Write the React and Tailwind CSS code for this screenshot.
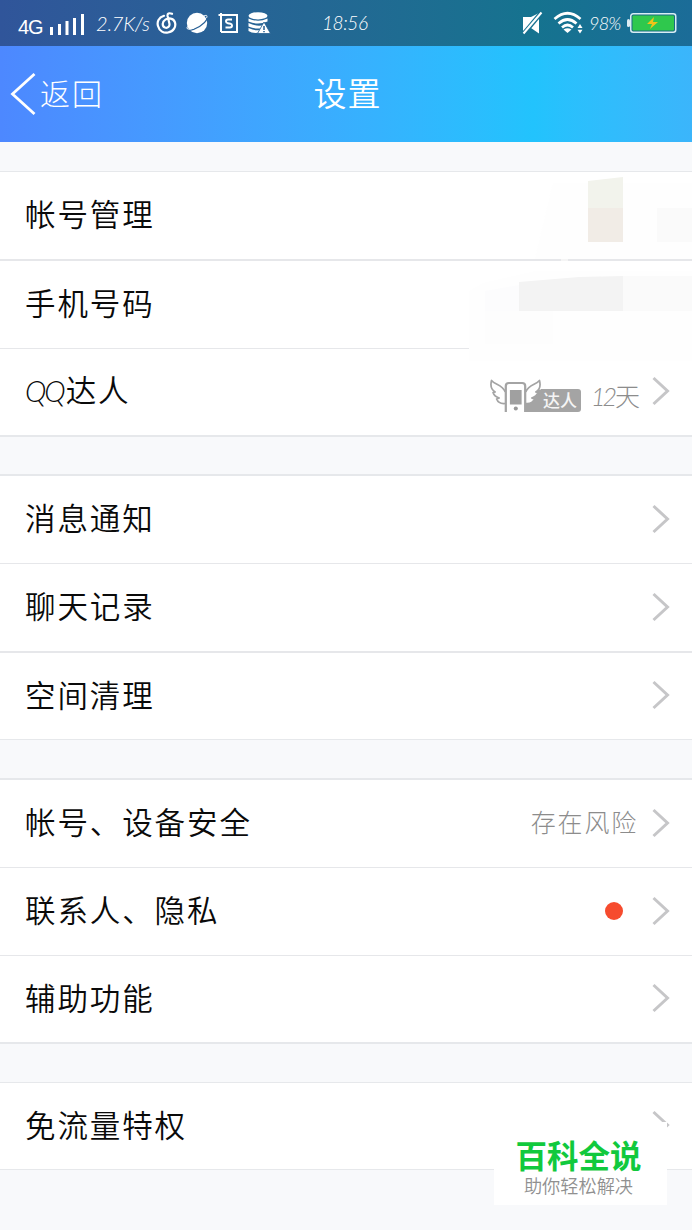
import React from "react";

function Chevron() {
  return (
    <svg className="mb-[2px] block h-[30px] w-[18px] shrink-0" viewBox="0 0 18 30" fill="none" stroke="#c6c6c8" strokeWidth="3">
      <path d="M1.500 2 L15.500 15 L1.500 28" />
    </svg>
  );
}

function Row({ label, arrow = true, className = "", children }) {
  return (
    <div className={`flex items-center border-[#e6e7ea] pl-[25px] pr-[22px] ${className}`}>
      <span className="whitespace-nowrap pb-[5px] text-[30.500px] font-[350] leading-10 tracking-[1.900px] text-[#0a0a0a]">{label}</span>
      <div className="ml-auto flex items-center">
        {children}
        {arrow && <Chevron />}
      </div>
    </div>
  );
}

function Group({ children, className = "" }) {
  return <section className={`border-[#e6e8eb] bg-white ${className}`}>{children}</section>;
}

function StatusBar() {
  return (
    <div className="flex h-[46px] items-center bg-linear-to-r from-[#30559a] via-[#15738f] via-77% to-[#1b6c98] text-white">
      <div className="flex h-full w-[322px] items-center pl-[18px]">
        <span className="mt-[7px] w-[32px] font-['Liberation_Sans'] text-[20px] leading-6 tracking-[-1px]">4G</span>
        <svg className="mt-[1px] h-[24px] w-[36px]" viewBox="0 0 36 24" fill="#fff">
          <rect x="0" y="15" width="3" height="8" />
          <rect x="8" y="12" width="3" height="11" />
          <rect x="15.500" y="9" width="3" height="14" />
          <rect x="23" y="6" width="3" height="17" />
          <rect x="31" y="2" width="3" height="21" />
        </svg>
        <span className="ml-[10px] w-[60px] whitespace-nowrap font-[Lato,sans-serif] text-[20px] font-light italic leading-6 tracking-[-0.200px]">2.7K/s</span>
        <svg className="h-[24px] w-[22px]" viewBox="0 0 22 24" fill="none" stroke="#fff" strokeWidth="2.200" strokeLinecap="round">
          <path d="M8 4.800 C2.500 6.500 0.800 11 2 15 C3.400 20.500 8 22.300 12 21.500 C17.500 20.600 20.500 15.500 18.800 11 C17.300 7 12.500 6.700 9.400 8.600 C6 10.700 5.800 15.200 9 16.500 C11.700 17.500 14 15.300 13.400 12.500 L11.600 5 C11.200 2.600 13 1.500 16 2.800" />
        </svg>
        <svg className="ml-[8px] h-[24px] w-[23px]" viewBox="0 0 23 24">
          <circle cx="11" cy="12" r="10.200" fill="#fff" />
          <path d="M3 19.500 C10 18.500 18 14 21.500 7.500" fill="none" stroke="#286096" strokeWidth="1.300" />
          <path d="M1.500 15.500 C-.5 19 4 18.500 8 17 M18 5 C21 3.500 21.500 4.800 20.500 7" fill="none" stroke="#fff" strokeWidth="1" />
        </svg>
        <svg className="ml-[9px] h-[24px] w-[22px]" viewBox="0 0 22 24" fill="none" stroke="#fff" strokeWidth="2">
          <path d="M3 2 L3 21 M.5 4 L19 4 L19 21 L3 21" />
          <path d="M14 8.500 H10 Q8 8.500 8 10.200 Q8 12 9.800 12.300 L12.500 12.700 Q14 13 14 14.500 Q14 16.500 12 16.500 H7.500" />
        </svg>
        <svg className="ml-[8px] h-[24px] w-[24px]" viewBox="0 0 24 24">
          <g fill="#fff">
            <ellipse cx="10" cy="4.800" rx="9.500" ry="3.600" />
            <path d="M.5 7.500 Q10 12 19.500 7.500 V10.500 Q10 14.500 .5 10.500 Z" />
            <path d="M.5 12 Q10 16.500 17 13.500 L14.500 17 Q7 18.500 .5 15.500 Z" />
            <path d="M.5 17 Q7 20 11.500 19 L10 21.800 Q4 22.500 .5 20 Z" />
            <path d="M16 11 L22.500 22.500 H9.500 Z" stroke="#245f92" strokeWidth=".8" />
          </g>
          <path d="M16 15 V19 M16 20 V21.200" stroke="#245f92" strokeWidth="1.500" />
        </svg>
      </div>
      <span className="w-[200px] font-[Lato,sans-serif] text-[19px] font-light italic leading-6 tracking-[-0.400px]">18:56</span>
      <svg className="h-[24px] w-[23px]" viewBox="0 0 23 24">
        <path d="M9 17 L17 22.500 V2 L9 6 H1 V20 Z" fill="#fff" />
        <path d="M1.500 23 L19.500 1.500" stroke="#17718f" strokeWidth="4.500" />
        <path d="M1.500 22.500 L19.500 1.500" stroke="#fff" strokeWidth="2" />
      </svg>
      <svg className="ml-[8px] h-[24px] w-[31px]" viewBox="0 0 31 24" fill="none" stroke="#fff" strokeWidth="2.700">
        <path d="M1.500 8 Q14.500 -3.500 27.500 8 M5.500 12.500 Q14.500 4.500 23.500 12.500 M9 16.500 Q14.500 11.500 20 16.500" />
        <path d="M10.500 18.500 Q14.500 16 18.500 18.500 L14.500 22 Z" fill="#fff" stroke="none" />
        <path d="M24.500 17 L27 13 L29.500 17 Z M24.500 18.800 L27 22.500 L29.500 18.800 Z" fill="#fff" stroke="none" />
      </svg>
      <span className="ml-[5px] w-[37px] whitespace-nowrap font-[Lato,sans-serif] text-[18px] font-light italic leading-6 tracking-[-0.800px]">98%</span>
      <svg className="h-[22px] w-[52px]" viewBox="0 0 52 22">
        <rect x="1" y="7" width="3" height="8" rx="1.500" fill="#dcecf4" />
        <rect x="4.750" y="1.750" width="45" height="18.500" rx="2.500" fill="#186b82" stroke="#d8edf4" strokeWidth="1.500" />
        <rect x="6.500" y="3.500" width="41.500" height="15" rx="1" fill="#2fc84d" />
        <path d="M28 5 L21 12 H26 L24 17 L32 10 H27 Z" fill="#f0c419" />
      </svg>
    </div>
  );
}

function Header() {
  return (
    <header className="grid h-24 grid-cols-3 items-center bg-linear-to-r from-[#4d88ff] via-[#22c3fd] via-77% to-[#3bb5fb] text-white">
      <div className="flex items-center pl-[10px]">
        <svg className="h-[44px] w-[27px]" viewBox="0 0 27 44" fill="none" stroke="#fff" strokeWidth="2.800">
          <path d="M24.500 2 L2.500 22 L24.500 42" />
        </svg>
        <span className="ml-[3px] pb-[4px] text-[30px] font-light leading-10 tracking-[2px]">返回</span>
      </div>
      <h1 className="pb-[5px] pl-[3px] text-center text-[33px] font-[350] leading-10 tracking-[1px]">设置</h1>
    </header>
  );
}

function TalentBadge() {
  return (
    <div className="mt-[7px] flex h-[34px] items-end">
      <svg className="h-[34px] w-[51px]" viewBox="0 0 50 34" preserveAspectRatio="none" fill="none" stroke="#a4a4a4" strokeWidth="1.700" strokeLinejoin="round">
        <path d="M32 10.500 H50 V33 H32 Z" fill="#a4a4a4" stroke="none" />
        <path d="M15 13 C12 5 5 6 1.500 1.500 C0 7 2 11 5 13 L3 13.500 C4 17 6 18 9 19 L6.500 20 C8 24 11 25 15 24.500" fill="#fff" />
        <path d="M35 13 C38 5 45 6 48.500 1.500 C50 7 48 11 45 13 L47 13.500 C46 17 44 18 41 19 L43.500 20 C42 24 39 25 35 24.500" fill="#fff" />
        <path d="M15.500 33 V7 Q15.500 4 18.500 4 H31.500 Q34.500 4 34.500 7 V33" fill="#fff" strokeWidth="2.200" />
        <rect x="19.500" y="11" width="11.500" height="14.500" fill="#a0a0a0" stroke="none" />
        <circle cx="25.300" cy="29.500" r="2" fill="#999" stroke="none" />
      </svg>
      <span className="mb-px flex h-[23px] w-[40px] items-center rounded-r-[3px] bg-[#a4a4a4] pl-[2px] text-[17px] font-medium leading-[22px] text-[#f5f5f5]">达人</span>
    </div>
  );
}

function Mosaic() {
  return (
    <svg className="absolute right-0 top-[173px] h-[188px] w-[225px]" viewBox="0 0 225 188">
      <path d="M86 10 H225 V86 H68 Z" fill="#fefefe" />
      <path d="M16 110 L68 98 H225 V188 H2 V118 Z" fill="#fefefe" />
      <path d="M121 8 L156 4 V35 H121 Z" fill="#f2f3ec" />
      <rect x="121" y="35" width="35" height="34" fill="#f1ece6" />
      <rect x="190" y="35" width="35" height="34" fill="#fafafa" />
      <rect x="94" y="86" width="7" height="2" fill="#f5f5f5" />
      <path d="M18 118 L52 112 V138 H18 Z" fill="#fcfcfd" />
      <path d="M52 109 L112 104 L156 103 V138 H52 Z" fill="#f3f3f3" />
      <path d="M156 103 H225 V138 H156 Z" fill="#fafafa" />
      <path d="M18 138 H86 V171 H18 Z" fill="#fdfdfd" />
    </svg>
  );
}

function Watermark() {
  return (
    <div className="absolute left-[494px] top-[1122px] flex h-[83px] w-[173px] flex-col items-center bg-white pt-[12px]">
      <div className="whitespace-nowrap pr-1 text-[31.500px] font-bold leading-[41px] text-[#11c93d]">百科全说</div>
      <div className="whitespace-nowrap pr-1 text-[18.200px] font-[350] leading-[20px] text-[#909090]">助你轻松解决</div>
    </div>
  );
}

export default function App() {
  return (
    <main className="relative h-[1230px] w-[692px] overflow-hidden bg-[#f8f9fb] font-['Noto_Sans_CJK_SC',sans-serif]">
      <StatusBar />
      <Header />
      <Group className="mt-[29px] border-t border-b-2">
        <Row label="帐号管理" arrow={false} className="h-[87px]" />
        <Row label="手机号码" arrow={false} className="h-[89px] border-t-2" />
        <Row label={<><span className="font-[Lato,sans-serif] text-[29px] font-light italic tracking-[-2px]">QQ</span><span className="ml-[2px]">达人</span></>} className="h-[87px] border-t">
          <TalentBadge />
          <span className="ml-[10px] mr-[12px] mt-[6px] text-[25px] font-light leading-8 text-[#8c8c8c]"><span className="font-[Lato,sans-serif] italic tracking-[-3px]">12</span><span className="ml-[1px]">天</span></span>
        </Row>
      </Group>
      <Group className="mt-[37px] border-t-2 border-b">
        <Row label="消息通知" className="h-[87px]" />
        <Row label="聊天记录" className="h-[88px] border-t" />
        <Row label="空间清理" className="h-[88px] border-t-2" />
      </Group>
      <Group className="mt-[38px] border-y-2">
        <Row label="帐号、设备安全" className="h-[87px]">
          <span className="mr-[14px] pb-[5px] text-[25px] font-light leading-8 tracking-[1.800px] text-[#8c8c8c]">存在风险</span>
        </Row>
        <Row label="联系人、隐私" className="h-[88px] border-t">
          <span className="mb-[2px] mr-[29px] size-[18px] rounded-full bg-[#f64b2e]" />
        </Row>
        <Row label="辅助功能" className="h-[87px] border-t" />
      </Group>
      <Group className="mt-[38px] border-y">
        <Row label="免流量特权" className="h-[86px]" />
      </Group>
      <Mosaic />
      <Watermark />
    </main>
  );
}
